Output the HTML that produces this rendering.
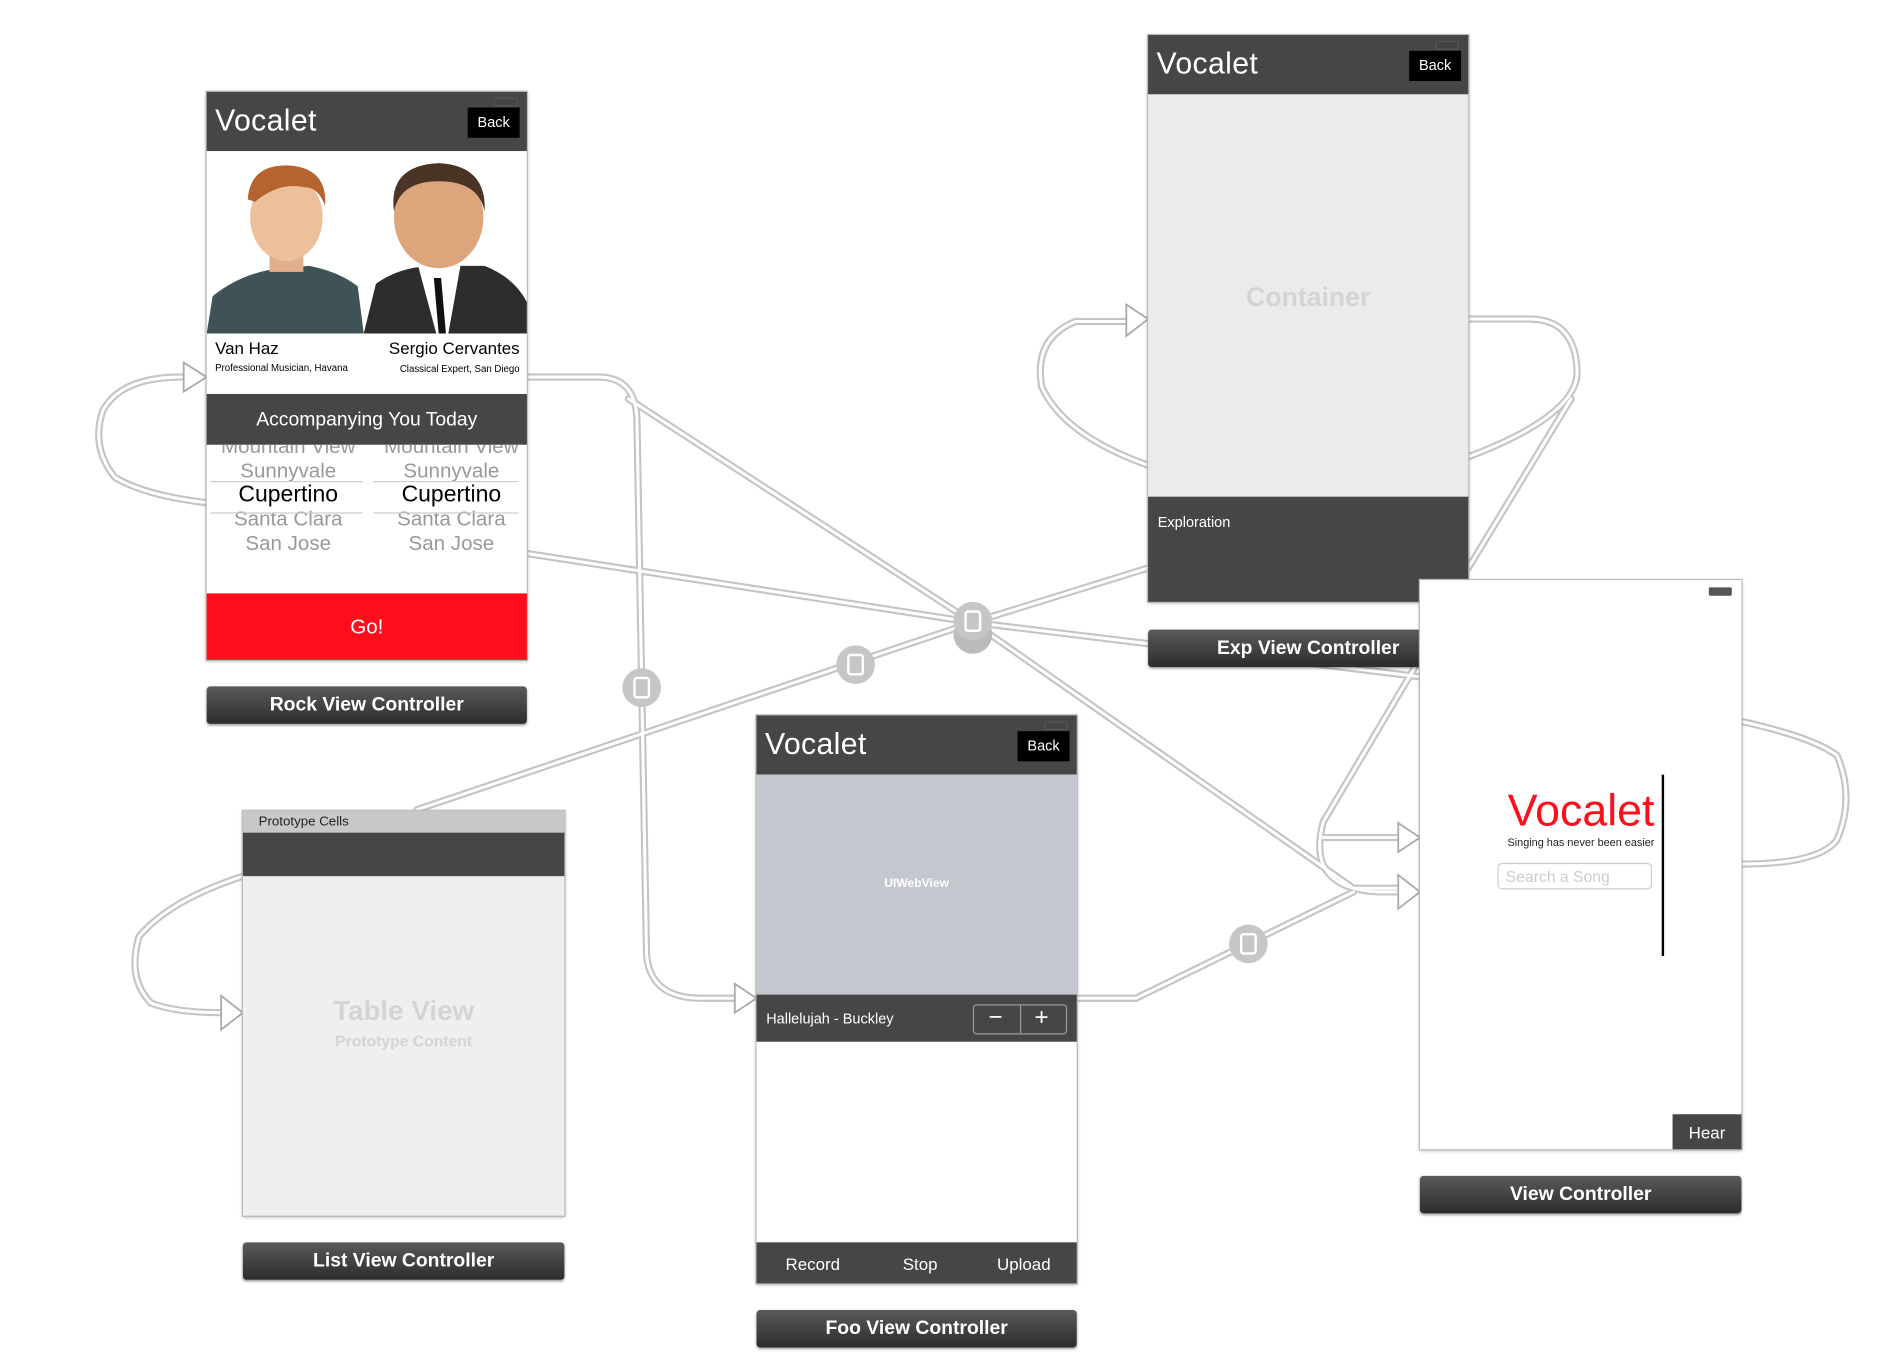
<!DOCTYPE html>
<html><head><meta charset="utf-8"><style>
html,body{margin:0;padding:0;background:#fff;width:1894px;height:1358px;overflow:hidden}
#w{position:absolute;left:0;top:0;width:1560px;height:1119px;transform:scale(1.2085,1.2085);transform-origin:0 0;font-family:"Liberation Sans",sans-serif}
.ph{position:absolute;background:#fff;box-shadow:0 1px 3px rgba(0,0,0,.35);outline:1px solid #bbb}
.hd{position:absolute;left:0;right:0;top:0;height:49px;background:#464646;color:#fff}
.hd .t{position:absolute;left:7px;top:10px;font-size:25px;letter-spacing:.3px}
.hd .b{position:absolute;right:6px;top:13px;width:43px;height:25px;background:#000;color:#fff;font-size:12px;text-align:center;line-height:25px}
.bat{position:absolute;right:8px;top:5px;width:17px;height:5px;border:1px solid #555;background:#444;border-radius:1px}
.lbl{position:absolute;height:31px;background:linear-gradient(#5a5a5a,#2c2c2c);border-radius:3px;color:#fff;font-weight:bold;font-size:16px;text-align:center;line-height:31px;box-shadow:0 1px 2px rgba(0,0,0,.4)}
.abs{position:absolute}
</style></head><body><div id="w">
<svg class="abs" style="left:0;top:0" width="1560" height="1119" viewBox="0 0 1560 1119">
<g fill="none" stroke-linecap="round" stroke-linejoin="round">
<g stroke="#c4c4c4" stroke-width="6">
<path d="M171,416 Q120,410 95,395 Q75,370 85,340 Q100,312 150,312"/>
<path d="M436,312 H495 Q525,312 527,345 L535,790 Q538,826 580,826 H610"/>
<path d="M520,330 L805,515 L1120,735 H1160"/>
<path d="M436,458 L805,515 L1175,560"/>
<path d="M345,670 L805,515 L950,470"/>
<path d="M891,826 H940 L1120,738"/>
<path d="M950,385 Q880,360 862,320 Q855,280 890,266 H935"/>
<path d="M1215,264 H1265 Q1305,264 1305,310 Q1302,345 1215,378"/>
<path d="M1300,330 L1215,470"/>
<path d="M1175,545 L1095,680 Q1080,735 1140,738 H1160"/>
<path d="M1441,597 Q1500,610 1520,625 Q1535,660 1520,695 Q1505,715 1441,715"/>
<path d="M1095,693 H1160"/>
<path d="M201,725 Q140,745 115,775 Q105,810 125,830 Q145,838 185,838"/>
</g>
<g stroke="#fff" stroke-width="2.5">
<path d="M171,416 Q120,410 95,395 Q75,370 85,340 Q100,312 150,312"/>
<path d="M436,312 H495 Q525,312 527,345 L535,790 Q538,826 580,826 H610"/>
<path d="M520,330 L805,515 L1120,735 H1160"/>
<path d="M436,458 L805,515 L1175,560"/>
<path d="M345,670 L805,515 L950,470"/>
<path d="M891,826 H940 L1120,738"/>
<path d="M950,385 Q880,360 862,320 Q855,280 890,266 H935"/>
<path d="M1215,264 H1265 Q1305,264 1305,310 Q1302,345 1215,378"/>
<path d="M1300,330 L1215,470"/>
<path d="M1175,545 L1095,680 Q1080,735 1140,738 H1160"/>
<path d="M1441,597 Q1500,610 1520,625 Q1535,660 1520,695 Q1505,715 1441,715"/>
<path d="M1095,693 H1160"/>
<path d="M201,725 Q140,745 115,775 Q105,810 125,830 Q145,838 185,838"/>
</g>
</g>
<g fill="#fff" stroke="#aaa" stroke-width="1.5">
<path d="M152,300 L171,312 L152,324 Z"/><path d="M608,814 L626,826 L608,838 Z"/>
<path d="M932,252 L950,264 L932,278 Z"/><path d="M1157,681 L1175,693 L1157,705 Z"/>
<path d="M1157,724 L1175,738 L1157,752 Z"/><path d="M183,824 L201,838 L183,852 Z"/>
</g>
<g>
<circle cx="531" cy="569" r="16" fill="#c6c6c6"/><rect x="525" y="561" width="12" height="16" rx="2" fill="none" stroke="#fff" stroke-width="2"/>
<circle cx="708" cy="550" r="16" fill="#c6c6c6"/><rect x="702" y="542" width="12" height="16" rx="2" fill="none" stroke="#fff" stroke-width="2"/>
<circle cx="805" cy="525" r="16" fill="#bbb"/>
<circle cx="805" cy="514" r="16" fill="#c6c6c6"/><rect x="799" y="506" width="12" height="16" rx="2" fill="none" stroke="#fff" stroke-width="2"/>
<circle cx="1033" cy="781" r="16" fill="#c6c6c6"/><rect x="1027" y="773" width="12" height="16" rx="2" fill="none" stroke="#fff" stroke-width="2"/>
</g>
</svg>

<!-- Rock -->
<div class="ph" style="left:171px;top:76px;width:265px;height:470px">
<div class="hd"><div class="bat"></div><div class="t">Vocalet</div><div class="b">Back</div></div>
<svg class="abs" style="left:0;top:49px" width="265" height="151" viewBox="0 0 265 151">
<path d="M0,151 L5,120 Q30,100 62,97 L85,95 Q110,100 125,112 L130,151Z" fill="#3f5255"/>
<rect x="52" y="70" width="28" height="30" fill="#e1b08a"/>
<ellipse cx="66" cy="55" rx="30" ry="36" fill="#ecc09a"/>
<path d="M34,40 Q36,10 70,12 Q100,15 98,45 Q92,30 82,30 Q60,25 40,42Z" fill="#b4652f"/>
<path d="M130,151 L140,110 Q160,95 190,95 L230,95 Q255,105 265,125 L265,151Z" fill="#2f2c2c"/>
<path d="M175,95 L190,151 L200,151 L210,95Z" fill="#fff"/><path d="M188,105 L192,151 L198,151 L194,105Z" fill="#111"/>
<ellipse cx="192" cy="55" rx="37" ry="42" fill="#dca57c"/>
<path d="M155,50 Q150,12 192,10 Q232,12 230,50 Q225,25 192,25 Q160,25 155,50Z" fill="#4a3426"/>
</svg>
<div class="abs" style="left:7px;top:204px;font-size:14px">Van Haz</div>
<div class="abs" style="left:7px;top:224px;font-size:8px">Professional Musician, Havana</div>
<div class="abs" style="right:6px;top:204px;font-size:14px">Sergio Cervantes</div>
<div class="abs" style="right:6px;top:225px;font-size:8px">Classical Expert, San Diego</div>
<div class="abs" style="left:0;right:0;top:250px;height:42px;background:#464646;color:#fff;font-size:16px;text-align:center;line-height:44px">Accompanying You Today</div>
<div class="abs" style="left:0;top:292px;width:265px;height:100px;overflow:hidden;font-size:17px;color:#999;text-align:center;line-height:20px">
<div class="abs" style="left:0;width:135px;top:-8px">Mountain View<br>Sunnyvale<br><span style="color:#000;font-size:19px">Cupertino</span><br>Santa Clara<br>San Jose</div>
<div class="abs" style="left:135px;width:135px;top:-8px">Mountain View<br>Sunnyvale<br><span style="color:#000;font-size:19px">Cupertino</span><br>Santa Clara<br>San Jose</div>
<div class="abs" style="left:3px;width:126px;top:30px;height:25px;border-top:1px solid #ccc;border-bottom:1px solid #ccc"></div>
<div class="abs" style="left:138px;width:120px;top:30px;height:25px;border-top:1px solid #ccc;border-bottom:1px solid #ccc"></div>
</div>
<div class="abs" style="left:0;right:0;top:415px;height:55px;background:#fe0d1b;color:#fff;font-size:17px;text-align:center;line-height:55px">Go!</div>
</div>
<div class="lbl" style="left:171px;top:568px;width:265px">Rock View Controller</div>

<!-- Exp -->
<div class="ph" style="left:950px;top:29px;width:265px;height:469px;background:#ebebeb">
<div class="hd"><div class="bat"></div><div class="t">Vocalet</div><div class="b">Back</div></div>
<div class="abs" style="left:0;right:0;top:204px;text-align:center;font-size:22px;font-weight:bold;color:#d4d4d4">Container</div>
<div class="abs" style="left:0;right:0;top:382px;bottom:0;background:#464646;color:#fff;font-size:12px;padding:14px 8px">Exploration</div>
</div>
<div class="lbl" style="left:950px;top:521px;width:265px">Exp View Controller</div>

<!-- List -->
<div class="ph" style="left:201px;top:671px;width:266px;height:335px;background:#efefef">
<div class="abs" style="left:0;right:0;top:0;height:18px;background:#c8c8c8;font-size:11px;line-height:18px;padding-left:13px;color:#222">Prototype Cells</div>
<div class="abs" style="left:0;right:0;top:18px;height:36px;background:#464646"></div>
<div class="abs" style="left:0;right:0;top:152px;text-align:center;font-size:23px;font-weight:bold;color:#d4d4d4">Table View</div>
<div class="abs" style="left:0;right:0;top:183px;text-align:center;font-size:13px;font-weight:bold;color:#d4d4d4">Prototype Content</div>
</div>
<div class="lbl" style="left:201px;top:1028px;width:266px">List View Controller</div>

<!-- Foo -->
<div class="ph" style="left:626px;top:592px;width:265px;height:470px">
<div class="hd"><div class="bat"></div><div class="t">Vocalet</div><div class="b">Back</div></div>
<div class="abs" style="left:0;right:0;top:49px;height:182px;background:#c4c7cd;color:#fff;font-size:10px;font-weight:bold;text-align:center;line-height:182px">UIWebView</div>
<div class="abs" style="left:0;right:0;top:231px;height:39px;background:#464646;color:#fff;font-size:12px;line-height:40px;padding-left:8px">Hallelujah - Buckley
<div class="abs" style="right:8px;top:8px;width:76px;height:23px;border:1px solid #999;border-radius:3px;line-height:22px;font-size:20px;font-weight:300"><span class="abs" style="left:12px;top:-1px">−</span><span class="abs" style="left:38px;top:0;width:1px;height:23px;background:#999"></span><span class="abs" style="left:50px;top:-1px">+</span></div></div>
<div class="abs" style="left:0;right:0;top:436px;height:34px;background:#464646;color:#fff;font-size:14px;line-height:36px"><span class="abs" style="left:24px">Record</span><span class="abs" style="left:121px">Stop</span><span class="abs" style="left:199px">Upload</span></div>
</div>
<div class="lbl" style="left:626px;top:1084px;width:265px">Foo View Controller</div>

<!-- VC -->
<div class="ph" style="left:1175px;top:480px;width:266px;height:471px">
<div class="abs" style="right:8px;top:6px;width:17px;height:5px;border:1px solid #555;background:#555;border-radius:1px"></div>
<div class="abs" style="left:200px;top:161px;width:2px;height:150px;background:#000"></div>
<div class="abs" style="right:72px;top:170px;font-size:37px;color:#fe0d1b">Vocalet</div>
<div class="abs" style="right:72px;top:212px;font-size:9px;color:#222">Singing has never been easier</div>
<div class="abs" style="left:64px;top:234px;width:128px;height:22px;border:1px solid #ccc;border-radius:4px;color:#ccc;font-size:13px;line-height:22px;padding-left:6px;box-sizing:border-box">Search a Song</div>
<div class="abs" style="right:0;bottom:0;width:57px;height:29px;background:#464646;color:#fff;font-size:14px;text-align:center;line-height:30px">Hear</div>
</div>
<div class="lbl" style="left:1175px;top:973px;width:266px">View Controller</div>
</div></body></html>
